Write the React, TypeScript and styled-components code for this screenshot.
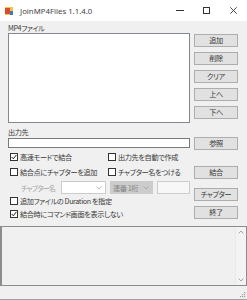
import React from "react";
import styled, { createGlobalStyle } from "styled-components";

const Global = createGlobalStyle`
  html, body { margin: 0; padding: 0; background: #f0f0f0; }
  #root { width: 247px; height: 300px; }
`;

const Window = styled.div`
  width: 247px;
  height: 300px;
  display: flex;
  flex-direction: column;
  background: #f0f0f0;
  overflow: hidden;
  font-family: "Noto Sans CJK JP", "Noto Sans", sans-serif;
  font-size: 7.2px;
  font-feature-settings: "palt";
  letter-spacing: -0.4px;
  color: #3a3a3a;
  box-sizing: border-box;
`;

const TitleBar = styled.div`
  height: 21px;
  flex: none;
  background: #fff;
  display: flex;
  align-items: center;
`;

const AppIcon = styled.svg`
  width: 8px;
  height: 8px;
  margin-left: 5px;
  flex: none;
`;

const TitleText = styled.span`
  margin-left: 7px;
  font-family: "Noto Sans", sans-serif;
  font-size: 7.8px;
  letter-spacing: 0;
  color: #444;
  flex: 1;
`;

const CaptionButton = styled.div`
  width: 27px;
  height: 21px;
  display: flex;
  align-items: center;
  justify-content: center;
`;

const Client = styled.div`
  display: flex;
  flex-direction: column;
  padding: 0 9px 0 8px;
  flex: none;
`;

const Label = styled.div<{ $h: number }>`
  height: ${(p) => p.$h}px;
  display: flex;
  align-items: flex-end;
  line-height: 10px;
  white-space: nowrap;
`;

const Section = styled.div`
  display: flex;
  gap: 4px;
`;

const LeftCol = styled.div`
  width: 182px;
  display: flex;
  flex-direction: column;
`;

const RightCol = styled.div<{ $gap?: number }>`
  width: 44px;
  display: flex;
  flex-direction: column;
  gap: ${(p) => p.$gap ?? 0}px;
  padding-top: 1px;
`;

const ListBox = styled.div`
  width: 182px;
  height: 90px;
  box-sizing: border-box;
  border: 1px solid #828790;
  background: #fff;
`;

const Button = styled.div<{ $top?: number }>`
  height: 13px;
  margin-top: ${(p) => p.$top ?? 0}px;
  box-sizing: border-box;
  border: 1px solid #adadad;
  background: #e1e1e1;
  display: flex;
  align-items: center;
  justify-content: center;
  white-space: nowrap;
  line-height: 1;
`;

const TextBox = styled.div`
  height: 10px;
  margin-top: 1px;
  box-sizing: border-box;
  border: 1px solid #7a7a7a;
  background: #fff;
`;

const Row = styled.div<{ $top: number; $h?: number }>`
  height: ${(p) => p.$h ?? 12}px;
  margin-top: ${(p) => p.$top}px;
  display: flex;
  align-items: center;
`;

const Check = styled.label<{ $w?: number }>`
  display: flex;
  align-items: center;
  margin-left: 2px;
  width: ${(p) => (p.$w ? `${p.$w}px` : "auto")};
  white-space: nowrap;
`;

const Box = styled.span`
  width: 8px;
  height: 8px;
  box-sizing: border-box;
  border: 1px solid #333;
  background: #fff;
  margin-right: 2px;
  display: flex;
  align-items: center;
  justify-content: center;
  flex: none;
`;

const DimLabel = styled.span`
  color: #a8a8a8;
  margin-left: 13px;
  width: 40px;
  letter-spacing: -0.9px;
  white-space: nowrap;
`;

const Combo = styled.div<{ $w: number; $fill?: boolean; $ml: number }>`
  width: ${(p) => p.$w}px;
  height: 13px;
  margin-left: ${(p) => p.$ml}px;
  box-sizing: border-box;
  border: 1px solid #cccccc;
  background: ${(p) => (p.$fill ? "#cccccc" : "#fff")};
  color: #838383;
  display: flex;
  align-items: center;
  padding: 0 3px 0 2px;
  white-space: nowrap;
`;

const ComboText = styled.span`
  flex: 1;
`;

const DisabledBox = styled.div`
  width: 33px;
  height: 13px;
  margin-left: 4px;
  box-sizing: border-box;
  border: 1px solid #cccccc;
  background: #f7f7f7;
`;

const LogBox = styled.div`
  flex: 1;
  margin-top: 6px;
  box-sizing: border-box;
  border: 1px solid #8c8c8c;
  border-left-width: 2px;
  background: #f0f0f0;
  display: flex;
  justify-content: flex-end;
`;

const ScrollBar = styled.div`
  width: 10px;
  background: #f3f3f3;
  border-left: 1px solid #e8e8e8;
  display: flex;
  flex-direction: column;
  justify-content: space-between;
  align-items: center;
  padding: 3px 0;
`;

const StatusBar = styled.div`
  height: 14px;
  flex: none;
  box-sizing: border-box;
  border-bottom: 1px solid #a0a0a0;
  display: flex;
  justify-content: flex-end;
  align-items: flex-end;
  padding: 0 1px 1px 0;
`;

const Chevron = ({ up, color = "#a6a6a6" }: { up?: boolean; color?: string }) => (
  <svg width="6" height="4" viewBox="0 0 6 4">
    <path
      d={up ? "M0.5 3.5 L3 1 L5.5 3.5" : "M0.5 0.5 L3 3 L5.5 0.5"}
      fill="none"
      stroke={color}
      strokeWidth="1"
    />
  </svg>
);

const CheckMark = () => (
  <svg width="6" height="6" viewBox="0 0 6 6">
    <path d="M0.6 3 L2.3 4.8 L5.4 0.9" fill="none" stroke="#222" strokeWidth="1" />
  </svg>
);

const CheckBox = ({ checked, label, w }: { checked?: boolean; label: string; w?: number }) => (
  <Check $w={w}>
    <Box>{checked && <CheckMark />}</Box>
    {label}
  </Check>
);

export default function App() {
  return (
    <>
      <Global />
      <Window>
        <TitleBar>
          <AppIcon viewBox="0 0 8 8">
            <rect x="0" y="0" width="8" height="8" fill="#f2c744" />
            <rect x="0" y="1" width="5" height="6" fill="#e0482c" />
            <rect x="5" y="4" width="3" height="4" fill="#3a78c8" />
          </AppIcon>
          <TitleText>JoinMP4Files 1.1.4.0</TitleText>
          <CaptionButton>
            <svg width="8" height="1" viewBox="0 0 8 1">
              <rect width="8" height="1" fill="#333" />
            </svg>
          </CaptionButton>
          <CaptionButton>
            <svg width="7" height="7" viewBox="0 0 7 7">
              <rect x="0.5" y="0.5" width="6" height="6" fill="none" stroke="#333" />
            </svg>
          </CaptionButton>
          <CaptionButton>
            <svg width="7" height="7" viewBox="0 0 7 7">
              <path d="M0.3 0.3 L6.7 6.7 M6.7 0.3 L0.3 6.7" stroke="#333" strokeWidth="0.9" />
            </svg>
          </CaptionButton>
        </TitleBar>
        <Client>
          <Label $h={12}>MP4ファイル</Label>
          <Section>
            <ListBox />
            <RightCol $gap={5}>
              <Button>追加</Button>
              <Button>削除</Button>
              <Button>クリア</Button>
              <Button>上へ</Button>
              <Button>下へ</Button>
            </RightCol>
          </Section>
          <Section>
            <LeftCol>
              <Label $h={14}>出力先</Label>
              <TextBox />
              <Row $top={3}>
                <CheckBox checked label="高速モードで結合" w={96} />
                <CheckBox label="出力先を自動で作成" />
              </Row>
              <Row $top={3}>
                <CheckBox label="結合点にチャプターを追加" w={96} />
                <CheckBox label="チャプター名をつける" />
              </Row>
              <Row $top={3} $h={13}>
                <DimLabel>チャプター名</DimLabel>
                <Combo $w={45} $ml={0}>
                  <ComboText />
                  <Chevron color="#bdbdbd" />
                </Combo>
                <Combo $w={43} $ml={4} $fill>
                  <ComboText>連番 1桁</ComboText>
                  <Chevron color="#a8a8a8" />
                </Combo>
                <DisabledBox />
              </Row>
              <Row $top={1}>
                <CheckBox label="追加ファイルの Duration を指定" />
              </Row>
              <Row $top={1}>
                <CheckBox checked label="結合時にコマンド画面を表示しない" />
              </Row>
            </LeftCol>
            <RightCol>
              <Button $top={13}>参照</Button>
              <Button $top={16}>結合</Button>
              <Button $top={9}>チャプター</Button>
              <Button $top={5}>終了</Button>
            </RightCol>
          </Section>
        </Client>
        <LogBox>
          <ScrollBar>
            <Chevron up />
            <Chevron />
          </ScrollBar>
        </LogBox>
        <StatusBar>
          <svg width="6" height="6" viewBox="0 0 6 6">
            <rect x="4" y="0" width="1.2" height="1.2" fill="#a0a0a0" />
            <rect x="2" y="2" width="1.2" height="1.2" fill="#a0a0a0" />
            <rect x="4" y="2" width="1.2" height="1.2" fill="#a0a0a0" />
            <rect x="0" y="4" width="1.2" height="1.2" fill="#a0a0a0" />
            <rect x="2" y="4" width="1.2" height="1.2" fill="#a0a0a0" />
            <rect x="4" y="4" width="1.2" height="1.2" fill="#a0a0a0" />
          </svg>
        </StatusBar>
      </Window>
    </>
  );
}
